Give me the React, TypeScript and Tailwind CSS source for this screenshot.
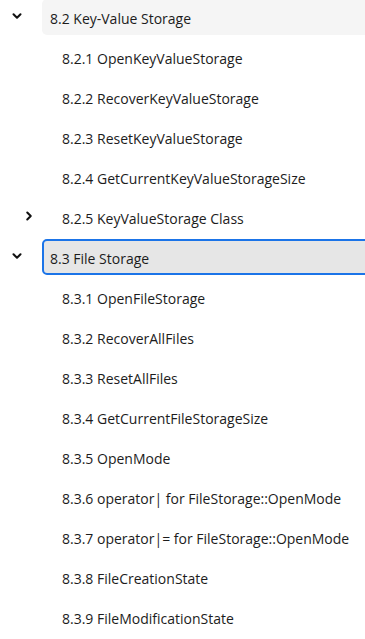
import { ChevronDown, ChevronRight } from "lucide-react";

type Item = {
  label: string;
  depth: number;
  chevron?: "down" | "right";
  tone?: "hover" | "active";
};

const ITEMS: Item[] = [
  { label: "8.2 Key-Value Storage", depth: 0, chevron: "down", tone: "hover" },
  { label: "8.2.1 OpenKeyValueStorage", depth: 1 },
  { label: "8.2.2 RecoverKeyValueStorage", depth: 1 },
  { label: "8.2.3 ResetKeyValueStorage", depth: 1 },
  { label: "8.2.4 GetCurrentKeyValueStorageSize", depth: 1 },
  { label: "8.2.5 KeyValueStorage Class", depth: 1, chevron: "right" },
  { label: "8.3 File Storage", depth: 0, chevron: "down", tone: "active" },
  { label: "8.3.1 OpenFileStorage", depth: 1 },
  { label: "8.3.2 RecoverAllFiles", depth: 1 },
  { label: "8.3.3 ResetAllFiles", depth: 1 },
  { label: "8.3.4 GetCurrentFileStorageSize", depth: 1 },
  { label: "8.3.5 OpenMode", depth: 1 },
  { label: "8.3.6 operator| for FileStorage::OpenMode", depth: 1 },
  { label: "8.3.7 operator|= for FileStorage::OpenMode", depth: 1 },
  { label: "8.3.8 FileCreationState", depth: 1 },
  { label: "8.3.9 FileModificationState", depth: 1 },
];

function TreeRow({ item }: { item: Item }) {
  const box =
    item.tone === "active"
      ? "border-2 border-[#1b74e8] bg-[#e6e6e6] pl-[6px]"
      : item.tone === "hover"
        ? "bg-[#f5f5f5] pl-2"
        : "pl-2";

  return (
    <div className={item.depth ? "flex h-10 items-center pl-3" : "flex h-10 items-center"}>
      <span className="flex w-[42px] shrink-0 items-center pb-[3px] pl-[10px] text-[#111]">
        {item.chevron === "down" && <ChevronDown className="h-[14px] w-[14px]" strokeWidth={3.5} />}
        {item.chevron === "right" && <ChevronRight className="h-[14px] w-[14px]" strokeWidth={3.5} />}
      </span>
      <div
        className={`-mr-2 flex h-9 min-w-0 flex-1 items-center whitespace-nowrap rounded-[5px] pt-[2px] ${box}`}
      >
        {item.label}
      </div>
    </div>
  );
}

export default function App() {
  return (
    <div
      className="h-[639px] w-[365px] overflow-hidden bg-white text-[14px] text-[#1c1c1c]"
      style={{ fontFamily: '"Open Sans", "Noto Sans", sans-serif' }}
    >
      <div className="-mt-[3px]">
        {ITEMS.map((item) => (
          <TreeRow key={item.label} item={item} />
        ))}
      </div>
    </div>
  );
}
